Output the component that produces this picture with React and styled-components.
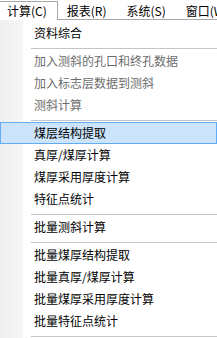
import React from "react";
import styled, { createGlobalStyle } from "styled-components";

const GlobalStyle = createGlobalStyle`
  html, body {
    margin: 0;
    padding: 0;
    background: #fff;
    overflow: hidden;
  }
  body {
    font-family: "Noto Sans CJK SC", "Noto Sans", sans-serif;
    font-size: 12px;
    color: #000;
  }
`;

const Screen = styled.div`
  width: 217px;
  height: 338px;
  overflow: hidden;
  background: #fff;
`;

const MenuBar = styled.div`
  display: flex;
  height: 19px;
  margin-left: -2px;
  background: #fff;
`;

const MenuTitle = styled.div`
  display: flex;
  align-items: center;
  box-sizing: border-box;
  height: 19px;
  margin-top: 1px;
  padding: 0 10px 1px 8px;
  border: 1px solid transparent;
  border-bottom: none;
  white-space: nowrap;
  position: relative;
  z-index: 2;
  background: ${(p) => (p.$open ? "#fff" : "transparent")};
  border-color: ${(p) => (p.$open ? "#a7a7a7" : "transparent")};
  margin-bottom: ${(p) => (p.$open ? "-1px" : "0")};
`;

const Dropdown = styled.div`
  width: 219px;
  border-top: 1px solid #a7a7a7;
  padding: 2px 0 4px;
  background: linear-gradient(to right, #efefef 0, #f7f7f7 23px, #fff 23px);
`;

const Item = styled.div`
  display: flex;
  align-items: center;
  box-sizing: border-box;
  height: 22px;
  margin-right: 2px;
  padding: 0 0 1px 33px;
  border: 1px solid ${(p) => (p.$active ? "#62acf5" : "transparent")};
  background: ${(p) => (p.$active ? "#cce4fb" : "transparent")};
  color: ${(p) => (p.$disabled ? "#6d6d6d" : "#000")};
  white-space: nowrap;
`;

const Separator = styled.div`
  height: 1px;
  margin: 4px 2px 1px 31px;
  background: #c4c4c4;
`;

const titles = ["计算(C)", "报表(R)", "系统(S)", "窗口(W)"];

const entries = [
  { label: "资料综合" },
  "sep",
  { label: "加入测斜的孔口和终孔数据", disabled: true },
  { label: "加入标志层数据到测斜", disabled: true },
  { label: "测斜计算", disabled: true },
  "sep",
  { label: "煤层结构提取", active: true },
  { label: "真厚/煤厚计算" },
  { label: "煤厚采用厚度计算" },
  { label: "特征点统计" },
  "sep",
  { label: "批量测斜计算" },
  "sep",
  { label: "批量煤厚结构提取" },
  { label: "批量真厚/煤厚计算" },
  { label: "批量煤厚采用厚度计算" },
  { label: "批量特征点统计" },
  "sep",
];

export default function App() {
  return (
    <Screen>
      <GlobalStyle />
      <MenuBar>
        {titles.map((t, i) => (
          <MenuTitle key={t} $open={i === 0}>
            {t}
          </MenuTitle>
        ))}
      </MenuBar>
      <Dropdown>
        {entries.map((e, i) =>
          e === "sep" ? (
            <Separator key={i} />
          ) : (
            <Item key={i} $disabled={e.disabled} $active={e.active}>
              {e.label}
            </Item>
          )
        )}
      </Dropdown>
    </Screen>
  );
}
